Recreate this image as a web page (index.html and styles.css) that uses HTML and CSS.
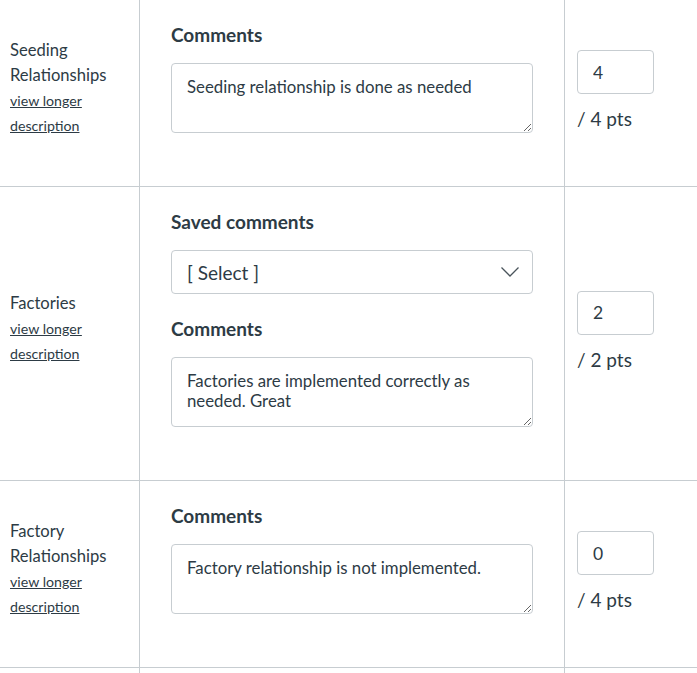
FILE: index.html
```html
<!DOCTYPE html>
<html lang="en">
<head>
<meta charset="utf-8">
<title>Rubric</title>
<link rel="stylesheet" href="styles.css">
</head>
<body>
<div class="rubric">
  <div class="row">
    <div class="cell crit">
      <div class="crit-inner">
        <div class="crit-name">Seeding Relationships</div>
        <a class="crit-link" href="#">view longer description</a>
      </div>
    </div>
    <div class="cell main">
      <div class="group">
        <div class="label">Comments</div>
        <textarea class="comment">Seeding relationship is done as needed</textarea>
      </div>
    </div>
    <div class="cell pts">
      <div class="pts-inner">
        <input class="score" type="text" value="4">
        <div class="pts-total">/ 4 pts</div>
      </div>
    </div>
  </div>

  <div class="row">
    <div class="cell crit">
      <div class="crit-inner">
        <div class="crit-name">Factories</div>
        <a class="crit-link" href="#">view longer description</a>
      </div>
    </div>
    <div class="cell main">
      <div class="group">
        <div class="label">Saved comments</div>
        <div class="select-wrap">
          <select class="select"><option>[ Select ]</option></select>
          <svg class="chevron" width="18" height="10" viewBox="0 0 18 10"><path d="M0.5 0.5 L9 9 L17.5 0.5" fill="none" stroke="#4a545b" stroke-width="1.3"/></svg>
        </div>
      </div>
      <div class="group">
        <div class="label">Comments</div>
        <textarea class="comment">Factories are implemented correctly as needed. Great</textarea>
      </div>
    </div>
    <div class="cell pts">
      <div class="pts-inner">
        <input class="score" type="text" value="2">
        <div class="pts-total">/ 2 pts</div>
      </div>
    </div>
  </div>

  <div class="row">
    <div class="cell crit">
      <div class="crit-inner">
        <div class="crit-name">Factory Relationships</div>
        <a class="crit-link" href="#">view longer description</a>
      </div>
    </div>
    <div class="cell main">
      <div class="group">
        <div class="label">Comments</div>
        <textarea class="comment">Factory relationship is not implemented.</textarea>
      </div>
    </div>
    <div class="cell pts">
      <div class="pts-inner">
        <input class="score" type="text" value="0">
        <div class="pts-total">/ 4 pts</div>
      </div>
    </div>
  </div>
  <div class="row row-tail">
    <div class="cell crit"></div>
    <div class="cell main"></div>
    <div class="cell pts"></div>
  </div>
</div>
</body>
</html>
```

FILE: styles.css
```css
* { box-sizing: border-box; }

html, body {
  margin: 0;
  padding: 0;
  background: #ffffff;
}

body {
  font-family: Lato, "Open Sans", sans-serif;
  color: #2d3b45;
  font-size: 16px;
  overflow: hidden;
}

.rubric {
  width: 697px;
}

.row {
  display: grid;
  grid-template-columns: 140px 425px 1fr;
  border-bottom: 1px solid #c7cdd1;
}

.cell {
  border-right: 1px solid #c7cdd1;
}

.cell.pts {
  border-right: none;
}

.crit {
  display: flex;
  align-items: center;
  padding: 0 6px 11px 10px;
}

.crit-name {
  font-size: 16.6px;
  line-height: 25px;
}

.crit-link {
  display: block;
  font-size: 14.2px;
  line-height: 25px;
  color: #2d3b45;
  text-decoration: underline;
}

.main {
  padding: 23px 31px 53px 31px;
}

.group + .group {
  margin-top: 23px;
}

.label {
  font-size: 19px;
  font-weight: 700;
  line-height: 24px;
  margin-bottom: 16px;
  color: #2d3b45;
}

.comment {
  display: block;
  width: 362px;
  height: 70px;
  margin: 0;
  padding: 13px 15px;
  border: 1px solid #c7cdd1;
  border-radius: 4px;
  font-family: Lato, "Open Sans", sans-serif;
  font-size: 16.8px;
  line-height: 20px;
  color: #2d3b45;
  background: #fff;
}

.select-wrap {
  position: relative;
  width: 362px;
  height: 44px;
}

.select {
  display: block;
  width: 362px;
  height: 44px;
  margin: 0;
  padding: 0 15px;
  border: 1px solid #c7cdd1;
  border-radius: 4px;
  background: #fff;
  appearance: none;
  -webkit-appearance: none;
  font-family: Lato, "Open Sans", sans-serif;
  font-size: 19px;
  color: #2d3b45;
}

.chevron {
  position: absolute;
  right: 14px;
  top: 17px;
}

.pts {
  display: flex;
  align-items: center;
  padding-left: 12px;
}

.pts-inner {
  padding-bottom: 5px;
}

.score {
  display: block;
  width: 77px;
  height: 44px;
  margin: 0;
  padding: 0 15px;
  border: 1px solid #c7cdd1;
  border-radius: 4px;
  font-family: Lato, "Open Sans", sans-serif;
  font-size: 17.5px;
  color: #2d3b45;
  background: #fff;
}

.pts-total {
  margin-top: 12px;
  font-size: 19px;
  line-height: 25px;
}

.row-tail {
  height: 20px;
  border-bottom: none;
}
```
